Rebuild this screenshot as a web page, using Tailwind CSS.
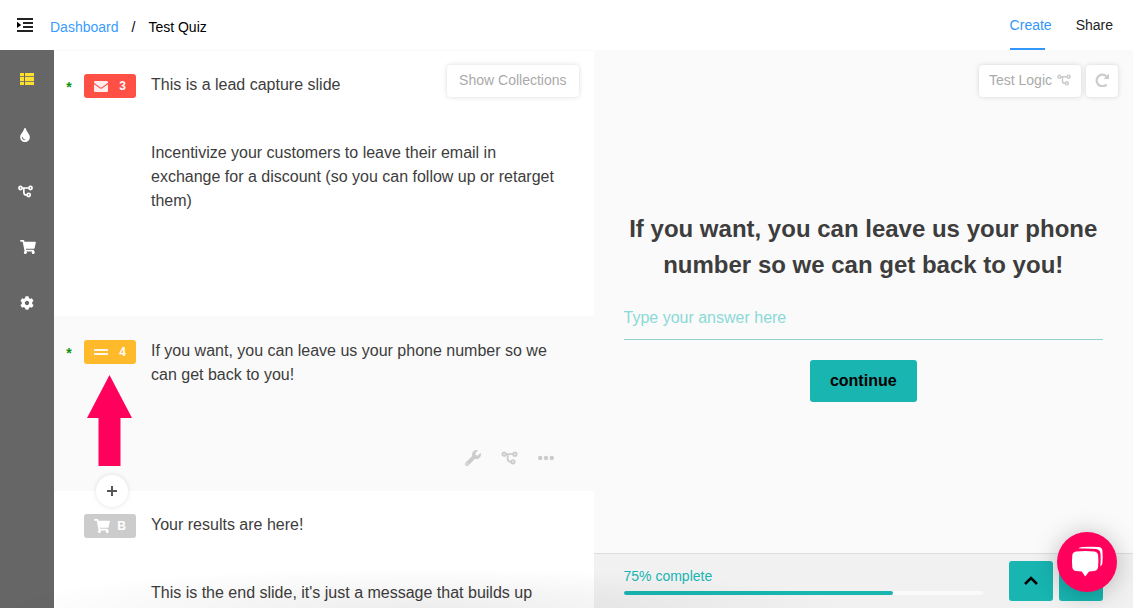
<!DOCTYPE html>
<html lang="en">
<head>
  <meta charset="UTF-8" />
  <meta name="viewport" content="width=device-width, initial-scale=1.0" />
  <title>Test Quiz</title>
  <script src="https://cdn.jsdelivr.net/npm/@tailwindcss/browser@4"></script>
</head>
<body class="h-screen flex flex-col overflow-hidden bg-white font-['Liberation_Sans',Arial,sans-serif] text-[#3d3d3d]">

  <!-- shared icons -->
  <svg class="hidden">
    <symbol id="i-logic" viewBox="0 0 16 14">
      <g fill="none" stroke="currentColor" stroke-width="1.8">
        <circle cx="2.6" cy="3.2" r="1.7"/><circle cx="13.4" cy="3.2" r="1.7"/><circle cx="11.4" cy="10.8" r="1.7"/>
        <path d="M4.3 3.2h7.4M6.2 3.2v4.600q0 3 2.600 3h1"/>
      </g>
    </symbol>
    <symbol id="i-cart" viewBox="0 0 576 512">
      <path fill="currentColor" d="M528.12 301.319l47.273-208C578.806 78.301 567.391 64 551.99 64H159.208l-9.166-44.81C147.758 8.021 137.93 0 126.529 0H24C10.745 0 0 10.745 0 24v16c0 13.255 10.745 24 24 24h69.883l70.248 343.435C147.325 417.1 136 435.222 136 456c0 30.928 25.072 56 56 56s56-25.072 56-56c0-15.674-6.447-29.835-16.824-40h209.647C430.447 426.165 424 440.326 424 456c0 30.928 25.072 56 56 56s56-25.072 56-56c0-22.172-12.888-41.332-31.579-50.405l5.517-24.276c3.413-15.018-8.002-29.319-23.403-29.319H218.117l-6.545-32h293.145c11.206 0 20.92-7.754 23.403-18.681z"/>
    </symbol>
  </svg>

  <header class="h-[50px] shrink-0 flex items-center justify-between">
    <nav class="flex items-center pl-4 pt-1 text-sm text-black" aria-label="Breadcrumb">
      <button class="mr-4" aria-label="Toggle menu">
        <svg class="w-[18px] h-4 -mt-1" viewBox="0 0 18 16">
          <path d="M1 2h16M7 6h10M7 10h10M1 14h16" stroke="#222" stroke-width="1.8"/><path d="M1 4.8L5.2 8 1 11z" fill="#000"/>
        </svg>
      </button>
      <a href="#" class="text-[#3a9bff]">Dashboard</a>
      <span class="mx-[13px]">/</span>
      <span>Test Quiz</span>
    </nav>
    <nav class="h-full flex gap-6 pr-5 text-sm leading-[50px]">
      <a href="#" class="relative text-[#3296fa]">Create<span class="absolute left-0 bottom-0 w-[35px] h-0.5 bg-[#3296fa]"></span></a>
      <a href="#" class="text-[#222]">Share</a>
    </nav>
  </header>

  <div class="flex-1 min-h-0 flex">
    <aside class="w-[54px] shrink-0 bg-[#666] text-white">
      <nav class="flex flex-col pt-px">
        <a href="#" class="h-14 flex items-center justify-center text-[#fde02f]" aria-label="Slides">
          <svg class="w-3.5 h-3" viewBox="0 0 14 12">
            <path fill="currentColor" d="M0 0h4v12H0zM5 0h9v12H5z"/>
            <path d="M0 3.500h14M0 8.500h14" stroke="#666" stroke-width="1" stroke-opacity=".8"/>
          </svg>
        </a>
        <a href="#" class="h-14 flex items-center pl-5" aria-label="Design">
          <svg class="w-2.5 h-3.5" viewBox="0 0 352 512" fill="currentColor"><path d="M205.22 22.09c-7.94-28.78-49.44-30.12-58.44 0C100.01 179.85 0 222.72 0 333.91 0 432.35 78.72 512 176 512s176-79.65 176-178.09c0-111.75-99.79-153.34-146.78-311.82zM176 448c-61.75 0-112-50.25-112-112 0-8.84 7.16-16 16-16s16 7.16 16 16c0 44.11 35.89 80 80 80 8.84 0 16 7.16 16 16s-7.16 16-16 16z"/></svg>
        </a>
        <a href="#" class="h-14 flex items-center pl-[18px]" aria-label="Logic"><svg class="w-[15px] h-[13px]"><use href="#i-logic"/></svg></a>
        <a href="#" class="h-14 flex items-center pl-5" aria-label="Products"><svg class="w-4 h-3.5"><use href="#i-cart"/></svg></a>
        <a href="#" class="h-14 flex items-center justify-center" aria-label="Settings">
          <svg class="w-3.5 h-3.5" viewBox="0 0 512 512" fill="currentColor"><path d="M487.4 315.7l-42.6-24.6c4.3-23.2 4.3-47 0-70.2l42.6-24.6c4.9-2.8 7.1-8.6 5.5-14-11.1-35.6-30-67.8-54.7-94.6-3.8-4.1-10-5.1-14.8-2.3L380.8 110c-17.9-15.4-38.5-27.3-60.8-35.1V25.8c0-5.6-3.9-10.5-9.4-11.7-36.7-8.2-74.3-7.8-109.2 0-5.5 1.2-9.4 6.1-9.4 11.7V75c-22.2 7.9-42.8 19.8-60.8 35.1L88.7 85.5c-4.9-2.8-11-1.9-14.8 2.3-24.7 26.7-43.6 58.9-54.7 94.6-1.7 5.4.6 11.2 5.5 14L67.3 221c-4.3 23.2-4.3 47 0 70.2l-42.6 24.6c-4.9 2.8-7.1 8.6-5.5 14 11.1 35.6 30 67.8 54.7 94.6 3.8 4.1 10 5.1 14.8 2.3l42.6-24.6c17.9 15.4 38.5 27.3 60.8 35.1v49.2c0 5.6 3.9 10.5 9.4 11.7 36.7 8.2 74.3 7.8 109.2 0 5.5-1.2 9.4-6.1 9.4-11.7v-49.2c22.2-7.9 42.8-19.8 60.8-35.1l42.6 24.6c4.9 2.8 11 1.9 14.8-2.3 24.7-26.7 43.6-58.9 54.7-94.6 1.5-5.5-.7-11.3-5.6-14.1zM256 336c-44.1 0-80-35.9-80-80s35.9-80 80-80 80 35.9 80 80-35.9 80-80 80z"/></svg>
        </a>
      </nav>
    </aside>

    <!-- slide list -->
    <main class="relative flex-1 min-w-0 overflow-hidden">
      <button class="absolute z-10 top-[15px] right-[15px] h-8 px-3 pb-0.5 rounded bg-white text-sm text-[#aaa] shadow-[0_0_5px_rgba(0,0,0,0.15)]">Show Collections</button>

      <article class="min-h-[266px] flex items-start border-t border-[#fafafa] bg-white pt-[22px] pr-8">
        <span class="w-[30px] shrink-0 text-center text-sm leading-7 font-bold text-[#0a960a]">*</span>
        <span class="w-[52px] h-6 mt-px mr-[15px] shrink-0 flex items-center justify-between px-2.5 rounded-[3px] bg-[#ff5046] text-xs font-bold text-white">
          <svg class="w-3.5 h-[11px]" viewBox="0 0 14 11"><path fill="#fff" fill-opacity=".9" d="M1.3 0h11.4Q14 0 14 1.3v.5L8 6.2q-1 .7-2 0L0 1.8v-.5Q0 0 1.3 0zM0 3.200l5.300 3.900q1.700 1.200 3.400 0L14 3.200v6.500q0 1.300-1.300 1.300H1.300Q0 11 0 9.700z"/></svg>
          3
        </span>
        <div class="text-base">
          <p>This is a lead capture slide</p>
          <p class="mt-11">Incentivize your customers to leave their email in exchange for a discount (so you can follow up or retarget them)</p>
        </div>
      </article>

      <article class="relative min-h-[174px] flex items-start border-t border-[#fafafa] bg-[#fafafa] pt-[22px] pr-8">
        <span class="w-[30px] shrink-0 text-center text-sm leading-7 font-bold text-[#0a960a]">*</span>
        <span class="w-[52px] h-6 mt-px mr-[15px] shrink-0 flex items-center justify-between px-2.5 rounded-[3px] bg-[#ffba2c] text-xs font-bold text-white">
          <svg class="w-3.5 h-2" viewBox="0 0 14 8"><path d="M0 2h14M0 6h14" stroke="#fff" stroke-opacity=".9" stroke-width="2"/></svg>
          4
        </span>
        <p class="text-base">If you want, you can leave us your phone number so we can get back to you!</p>

        <!-- pointer to the slide badge -->
        <svg class="absolute left-[33px] top-[58px] w-[45px] h-[92px]" viewBox="0 0 45 92"><path fill="#ff005c" d="M22.500 0L45 43H33.500V91H11.500V43H0z"/></svg>

        <div class="absolute right-10 bottom-6 flex items-center gap-5 text-[#ccc]">
          <button aria-label="Edit">
            <svg class="w-4 h-4" viewBox="0 0 512 512" fill="currentColor"><path d="M507.73 109.1c-2.24-9.03-13.54-12.09-20.12-5.51l-74.36 74.36-67.88-11.31-11.31-67.88 74.36-74.36c6.62-6.62 3.43-17.9-5.66-20.16-47.38-11.74-99.55.91-136.58 37.93-39.64 39.64-50.55 97.1-34.05 147.2L18.74 402.76c-24.99 24.99-24.99 65.51 0 90.5 24.99 24.99 65.51 24.99 90.5 0l213.21-213.21c50.12 16.71 107.47 5.68 147.37-34.22 37.07-37.07 49.7-89.32 37.91-136.73zM64 472c-13.25 0-24-10.75-24-24 0-13.26 10.75-24 24-24s24 10.74 24 24c0 13.25-10.75 24-24 24z"/></svg>
          </button>
          <button aria-label="Logic jumps"><svg class="w-[17px] h-3.5"><use href="#i-logic"/></svg></button>
          <button aria-label="More">
            <svg class="w-4 h-4" viewBox="0 0 16 16" fill="currentColor"><circle cx="2.2" cy="8" r="2.2"/><circle cx="8" cy="8" r="2.2"/><circle cx="13.8" cy="8" r="2.2"/></svg>
          </button>
        </div>

        <button class="absolute z-10 left-[42px] -bottom-[17px] w-8 h-8 rounded-full bg-white flex items-center justify-center shadow-[0_0_5px_rgba(0,0,0,0.12)]" aria-label="Add slide">
          <svg class="w-2.5 h-2.5" viewBox="0 0 10 10"><path d="M5 0v10M0 5h10" stroke="#555" stroke-width="2"/></svg>
        </button>
      </article>

      <article class="min-h-[266px] flex items-start border-t border-[#fafafa] bg-white pt-[22px] pl-[30px] pr-8">
        <span class="w-[52px] h-6 mt-px mr-[15px] shrink-0 flex items-center justify-between px-2.5 rounded-[3px] bg-[#ccc] text-xs font-bold text-white">
          <svg class="w-4 h-3.5"><use href="#i-cart"/></svg>
          B
        </span>
        <div class="text-base">
          <p>Your results are here!</p>
          <p class="mt-11">This is the end slide, it's just a message that builds up</p>
        </div>
      </article>
    </main>

    <!-- preview -->
    <section class="relative flex-1 min-w-0 flex flex-col bg-[#fafafa]">
      <div class="absolute top-[15px] right-[15px] flex gap-[5px] text-sm text-[#aaa]">
        <button class="h-8 px-2.5 pb-0.5 flex items-center rounded bg-white shadow-[0_0_5px_rgba(0,0,0,0.15)]">Test Logic<svg class="w-3.5 h-3 ml-[5px] text-[#ccc]"><use href="#i-logic"/></svg></button>
        <button class="w-8 h-8 pb-0.5 flex items-center justify-center rounded bg-white text-[#ccc] shadow-[0_0_5px_rgba(0,0,0,0.15)]" aria-label="Restart">
          <svg class="w-3.5 h-3.5" viewBox="0 0 14 14"><path d="M11.6 11.4A5.800 5.800 0 1 1 11.400 3.200" fill="none" stroke="currentColor" stroke-width="2.2"/><path d="M14 .5v5.500H8.500z" fill="currentColor"/></svg>
        </button>
      </div>

      <form class="flex-1 flex flex-col items-center justify-center px-[30px] pt-[9px]">
        <label for="answer" class="text-2xl leading-9 font-bold text-center">If you want, you can leave us your phone number so we can get back to you!</label>
        <input id="answer" type="text" placeholder="Type your answer here" class="w-full h-[42px] mt-[15px] border-b border-[#8ed3d1] bg-transparent text-base placeholder:text-[#8bd9d7] outline-none" />
        <button type="button" class="h-[42px] mt-5 px-5 rounded-[3px] bg-[#18b5b1] text-base font-bold text-black">continue</button>
      </form>

      <footer class="h-[55px] shrink-0 flex items-start border-t border-[#ddd] bg-[#f1f1f1] px-[30px] pt-[7px]">
        <div class="flex-1 mr-[26px] pt-[5px] text-sm text-[#18b5b1]">
          <p>75% complete</p>
          <div class="h-1 mt-[5px] rounded-full bg-[#fafafa]"><div class="h-1 rounded-full bg-[#18b5b1]" style="width:75%"></div></div>
        </div>
        <div class="flex gap-1.5">
          <button class="w-11 h-10 flex items-center justify-center rounded-[3px] bg-[#18b5b1]" aria-label="Previous">
            <svg class="w-3.5 h-2.5" viewBox="0 0 14 10"><path d="M1 8L7 2l6 6" fill="none" stroke="#000" stroke-width="2.5"/></svg>
          </button>
          <button class="w-11 h-10 flex items-center justify-center rounded-[3px] bg-[#18b5b1]" aria-label="Next">
            <svg class="w-3.5 h-2.5" viewBox="0 0 14 10"><path d="M1 2l6 6 6-6" fill="none" stroke="#000" stroke-width="2.5"/></svg>
          </button>
        </div>
      </footer>
    </section>
  </div>

  <!-- soft shade along the bottom edge -->
  <div class="fixed z-10 left-0 bottom-0 w-3/4 h-10 pointer-events-none bg-[radial-gradient(ellipse_at_bottom,rgba(0,0,0,0.07),transparent_70%)]"></div>

  <!-- chat launcher -->
  <button class="fixed z-20 right-4 bottom-4 w-[60px] h-[60px] rounded-full bg-[#ff005c] shadow-[0_2px_24px_rgba(0,0,0,0.25)] flex items-center justify-center" aria-label="Open chat">
    <svg class="w-8 h-8" viewBox="0 0 32 32" fill="#fff">
      <path d="M7.500 2.600Q8.500 1.200 11 1.100q9-.6 16.500 0 3.500.4 3.900 3.400.6 6 0 12.500-.2 2.200-2 3.400.5-8.500 0-13.400-.5-3.700-4.400-4.100-8-.7-17.500-.3z"/>
      <path d="M5 5.600q9.500-1 18.500 0 3.200.5 3.600 3.500.6 6 0 12-.4 3.500-3.800 4-2.500.4-5.200.5L14.200 30.500l-3.400-4.900q-3-.1-5.800-.5-3.200-.5-3.700-3.800-.7-6 0-12Q1.700 6.100 5 5.600z"/>
    </svg>
  </button>

</body>
</html>
